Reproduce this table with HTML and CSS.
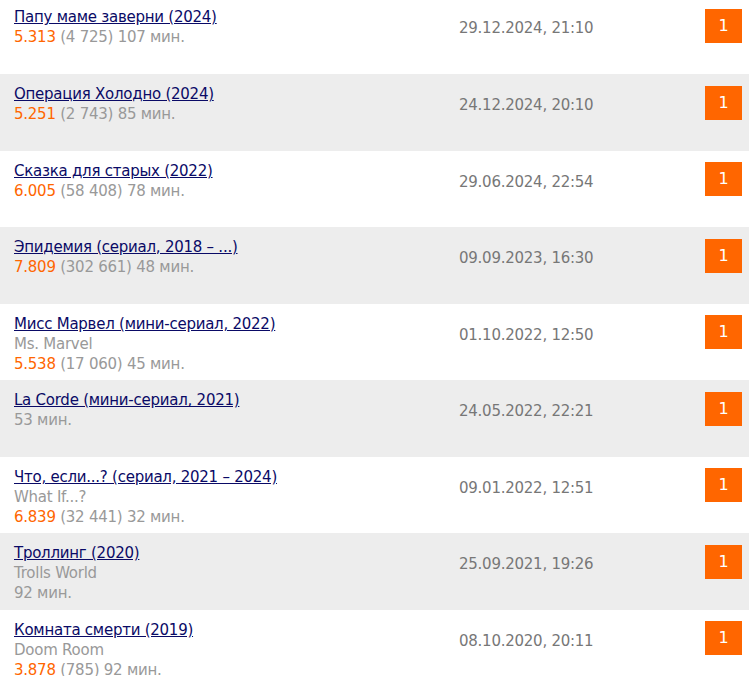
FILE: index.html
```html
<!doctype html>
<html lang="ru">

<head>
    <meta charset="utf-8">
    <title>Оценки</title>
    <link rel="stylesheet" href="styles.css">
</head>

<body>
    <div class="votes-list">
        <div class="votes-row">
            <div class="votes-film">
                <a href="#">Папу маме заверни (2024)</a>
                <div class="votes-info"><span class="votes-rating">5.313</span> (4 725) 107 мин.</div>
            </div>
            <div class="votes-date">29.12.2024, 21:10</div>
            <div class="votes-mark">1</div>
        </div>
        <div class="votes-row">
            <div class="votes-film">
                <a href="#">Операция Холодно (2024)</a>
                <div class="votes-info"><span class="votes-rating">5.251</span> (2 743) 85 мин.</div>
            </div>
            <div class="votes-date">24.12.2024, 20:10</div>
            <div class="votes-mark">1</div>
        </div>
        <div class="votes-row">
            <div class="votes-film">
                <a href="#">Сказка для старых (2022)</a>
                <div class="votes-info"><span class="votes-rating">6.005</span> (58 408) 78 мин.</div>
            </div>
            <div class="votes-date">29.06.2024, 22:54</div>
            <div class="votes-mark">1</div>
        </div>
        <div class="votes-row">
            <div class="votes-film">
                <a href="#">Эпидемия (сериал, 2018 – ...)</a>
                <div class="votes-info"><span class="votes-rating">7.809</span> (302 661) 48 мин.</div>
            </div>
            <div class="votes-date">09.09.2023, 16:30</div>
            <div class="votes-mark">1</div>
        </div>
        <div class="votes-row">
            <div class="votes-film">
                <a href="#">Мисс Марвел (мини-сериал, 2022)</a>
                <div class="votes-info">Ms. Marvel</div>
                <div class="votes-info"><span class="votes-rating">5.538</span> (17 060) 45 мин.</div>
            </div>
            <div class="votes-date">01.10.2022, 12:50</div>
            <div class="votes-mark">1</div>
        </div>
        <div class="votes-row">
            <div class="votes-film">
                <a href="#">La Corde (мини-сериал, 2021)</a>
                <div class="votes-info">53 мин.</div>
            </div>
            <div class="votes-date">24.05.2022, 22:21</div>
            <div class="votes-mark">1</div>
        </div>
        <div class="votes-row">
            <div class="votes-film">
                <a href="#">Что, если...? (сериал, 2021 – 2024)</a>
                <div class="votes-info">What If...?</div>
                <div class="votes-info"><span class="votes-rating">6.839</span> (32 441) 32 мин.</div>
            </div>
            <div class="votes-date">09.01.2022, 12:51</div>
            <div class="votes-mark">1</div>
        </div>
        <div class="votes-row">
            <div class="votes-film">
                <a href="#">Троллинг (2020)</a>
                <div class="votes-info">Trolls World</div>
                <div class="votes-info">92 мин.</div>
            </div>
            <div class="votes-date">25.09.2021, 19:26</div>
            <div class="votes-mark">1</div>
        </div>
        <div class="votes-row">
            <div class="votes-film">
                <a href="#">Комната смерти (2019)</a>
                <div class="votes-info">Doom Room</div>
                <div class="votes-info"><span class="votes-rating">3.878</span> (785) 92 мин.</div>
            </div>
            <div class="votes-date">08.10.2020, 20:11</div>
            <div class="votes-mark">1</div>
        </div>
    </div>
</body>

</html>
```

FILE: styles.css
```css
html,
body {
    margin: 0;
    background-color: #fff;
    font-family: "DejaVu Sans", Verdana, sans-serif;
    font-size: 15px;
    line-height: 20px;
}

.votes-list {
    margin-top: -2.57px;
}

.votes-row {
    display: grid;
    grid-template-columns: 445px 1fr 37px;
    box-sizing: border-box;
    height: 76.57px;
    padding: 10px 7px 0 14px;
    overflow: hidden;
    letter-spacing: -0.25px;
}

.votes-row:nth-child(even) {
    background-color: #ededed;
}

.votes-film a {
    color: #0a0a66;
    text-decoration: underline;
}

.votes-info {
    color: #999;
}

.votes-rating {
    color: #ff6600;
}

.votes-date {
    padding-top: 11px;
    color: #777;
}

.votes-mark {
    align-self: start;
    margin-top: 1.5px;
    height: 34px;
    line-height: 34px;
    background-color: #ff6600;
    color: #fff;
    text-align: center;
    font-size: 16px;
    letter-spacing: 0;
}
```
